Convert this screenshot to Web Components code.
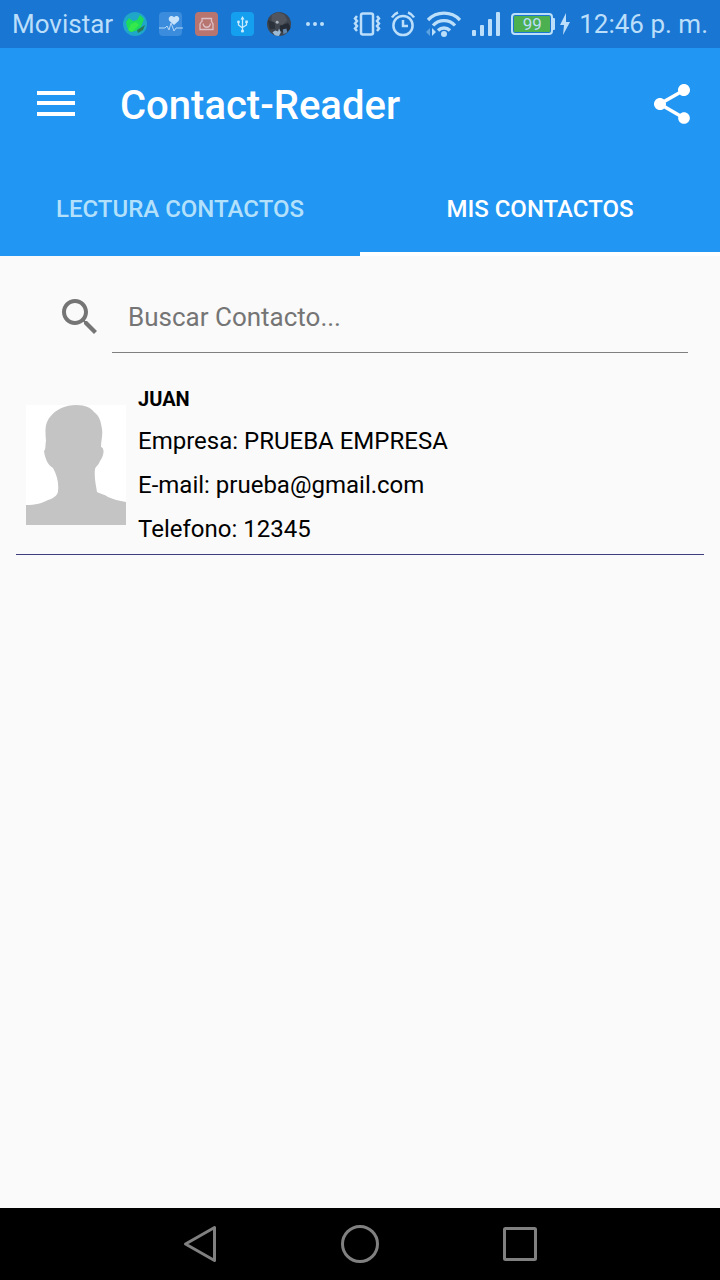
<!DOCTYPE html>
<html lang="es">
<head>
<meta charset="utf-8">
<meta name="viewport" content="width=device-width, initial-scale=1">
<title>Contact-Reader</title>
<style>
  body {
    margin: 0;
    font-family: Roboto, "Noto Sans", sans-serif;
    background: #fafafa;
    color: #000;
  }
</style>
</head>
<body>
<contact-app></contact-app>

<script>
// Barra de estado del sistema
class StatusBar extends HTMLElement {
  constructor() {
    super();
    this.attachShadow({ mode: 'open' });
    this.render();
  }

  render() {
    this.shadowRoot.innerHTML = `
      <style>
        :host {
          display: flex;
          align-items: center;
          justify-content: space-between;
          height: 48px;
          padding: 0 12px;
          background: #1976d2;
          color: #bbdefb;
          font-size: 26px;
          line-height: 50px;
          white-space: nowrap;
        }

        .group, .icons {
          display: flex;
          align-items: center;
        }

        .left {
          gap: 10px;
        }

        .left .icons {
          gap: 12px;
        }

        .right {
          gap: 8px;
        }

        .right .icons {
          gap: 10px;
        }

        .power {
          display: flex;
          align-items: center;
          gap: 4px;
        }

        .battery {
          display: flex;
          align-items: center;
        }

        .level {
          box-sizing: border-box;
          width: 42px;
          height: 22px;
          border: 2px solid #bbdefb;
          border-radius: 4px;
          background: #4caf50;
          box-shadow: inset 0 0 0 1px #1976d2;
          font-size: 17px;
          line-height: 19px;
          text-align: center;
        }

        .cap {
          width: 2px;
          height: 12px;
          background: #bbdefb;
          border-radius: 0 1px 1px 0;
        }

        svg {
          display: block;
          flex: none;
        }
      </style>

      <div class="group left">
        <slot name="carrier"></slot>
        <div class="icons">
          <svg width="24" height="24" viewBox="0 0 24 24">
            <circle cx="12" cy="12" r="12" fill="#1fa6c8"></circle>
            <path d="M3 10 6 6l4 3 4-1 3-5 4 4-3 8-5 4-6 1-3-5z" fill="#1ddb5c"></path>
            <path d="M8 12l5-2 3 3-7 7-4-2z" fill="#35e84b"></path>
            <path d="M14 18l8-5-2 5-5 3z" fill="#277c55"></path>
          </svg>
          <svg width="24" height="24" viewBox="0 0 24 24">
            <rect x="0" y="0" width="23" height="24" rx="4" fill="#3b8cdc"></rect>
            <path d="M15 13 10.500 9C8 6 12 2 15 5.300 18 2 22 6 19.500 9z" fill="#c7e3fb"></path>
            <path d="M0 16h6l2-2 2 4 2-7 3 8 2-3h7" fill="none" stroke="#b6d8f7" stroke-width="1"></path>
          </svg>
          <svg width="24" height="24" viewBox="0 0 24 24">
            <rect x="0" y="0" width="23" height="24" rx="4" fill="#b87570"></rect>
            <g fill="none" stroke="#dcc0c6" stroke-width="1.300">
              <path d="M7 10V6.500h9.500V10"></path>
              <path d="M6.500 9.500 5 12v5.500h13V12l-1.500-2.500"></path>
              <path d="M8 11.500c1 5 6.500 5 7.500 0"></path>
            </g>
          </svg>
          <svg width="24" height="24" viewBox="0 0 24 24">
            <rect x="0" y="0" width="23" height="24" rx="4" fill="#14a0ee"></rect>
            <g fill="none" stroke="#c8ebff" stroke-width="1.300">
              <path d="M11.500 6v13M7.500 10v3l4 3M15.500 10v3l-4 2.500"></path>
            </g>
            <path d="M11.500 4l2 3.500h-4zM14.300 8.500h2.500V11h-2.500z" fill="#c8ebff"></path>
            <circle cx="7.500" cy="10" r="1.400" fill="#c8ebff"></circle>
            <circle cx="11.500" cy="19" r="1.600" fill="#c8ebff"></circle>
          </svg>
          <svg width="24" height="24" viewBox="0 0 26 26">
            <defs><clipPath id="disc"><circle cx="13" cy="13" r="13"></circle></clipPath></defs>
            <g clip-path="url(#disc)">
              <path d="M0 0h26v26H0z" fill="#3f454f"></path>
              <path d="M5 3l7-3 7 3 3 6-5 5-6-1-6-3z" fill="#50555e"></path>
              <path d="M1 9l7 2 1 7-6 1z" fill="#2b323c"></path>
              <path d="M14 15l9-3 3 6-6 5-6-3z" fill="#252b34"></path>
              <circle cx="11" cy="11" r="1.600" fill="#a9b1ba"></circle>
              <path d="M6 22l3-2 3 1 1-3 2 4-2 4H9z" fill="#9dbad4"></path>
              <path d="M17 19l4-1 1 4-4 2z" fill="#6387ac"></path>
            </g>
          </svg>
          <svg width="24" height="24" viewBox="0 0 24 24" fill="#bbdefb">
            <circle cx="5" cy="12" r="2"></circle>
            <circle cx="12" cy="12" r="2"></circle>
            <circle cx="19" cy="12" r="2"></circle>
          </svg>
        </div>
      </div>

      <div class="group right">
        <div class="icons">
          <svg width="28" height="24" viewBox="0 0 28 24" fill="none" stroke="#bbdefb">
            <rect x="8" y="1.500" width="12" height="21" rx="2" stroke-width="2.500"></rect>
            <path d="M4 4 2 6.500 4 9 2 11.500 4 14 2 16.500 4 19M24 4l2 2.500L24 9l2 2.500L24 14l2 2.500L24 19" stroke-width="2.500"></path>
          </svg>
          <svg width="24" height="26" viewBox="0 0 24 26" fill="none" stroke="#bbdefb" stroke-width="2.500">
            <circle cx="12" cy="14.500" r="9.600"></circle>
            <path d="M12 9v6h5"></path>
            <path d="M1 6.500Q3 3 7 1.500M23 6.500Q21 3 17 1.500"></path>
          </svg>
          <svg width="36" height="26" viewBox="0 0 36 26">
            <g fill="none" stroke="#bbdefb" stroke-width="3.300">
              <path d="M3 9A22 22 0 0 1 35 9"></path>
              <path d="M8 14.500A15 15 0 0 1 30 14.500"></path>
              <path d="M13 19.500A8.500 8.500 0 0 1 25 19.500"></path>
            </g>
            <circle cx="19" cy="23" r="3" fill="#bbdefb"></circle>
            <path d="M7 17l4 4-4 4z" fill="#bbdefb"></path>
            <path d="M5 17l-4 4 4 4z" fill="#5fa2e2"></path>
          </svg>
          <svg width="30" height="26" viewBox="0 0 30 26" fill="#bbdefb">
            <rect x="1" y="19" width="4" height="6" rx="1"></rect>
            <rect x="9" y="14" width="4" height="11" rx="1"></rect>
            <rect x="17" y="8" width="4" height="17" rx="1"></rect>
            <rect x="25" y="1" width="4" height="24" rx="1"></rect>
          </svg>
          <div class="power">
            <div class="battery">
              <div class="level"><slot name="battery"></slot></div>
              <div class="cap"></div>
            </div>
            <svg width="12" height="22" viewBox="0 0 12 22" fill="#bbdefb">
              <path d="M7 0 1 12h4L4 22l7-13H7z"></path>
            </svg>
          </div>
        </div>
        <slot name="time"></slot>
      </div>
    `;
  }
}

// Barra superior con menú, título y compartir
class AppToolbar extends HTMLElement {
  constructor() {
    super();
    this.attachShadow({ mode: 'open' });
    this.render();
  }

  render() {
    this.shadowRoot.innerHTML = `
      <style>
        :host {
          display: flex;
          align-items: center;
          height: 112px;
          padding: 0 24px 0 32px;
          background: #2196f3;
          color: #fff;
        }

        h1 {
          flex: 1;
          margin: 0;
          padding: 4px 0 0 40px;
          font-size: 40px;
          font-weight: 500;
          line-height: 48px;
        }

        button {
          display: block;
          padding: 0;
          border: none;
          background: none;
          color: inherit;
          cursor: pointer;
        }

        svg {
          display: block;
        }
      </style>

      <button type="button" aria-label="Abrir menú">
        <svg width="48" height="48" viewBox="0 0 48 48" fill="currentColor">
          <path d="M5 11h38v4H5zM5 21h38v4H5zM5 32h38v4H5z"></path>
        </svg>
      </button>
      <h1><slot></slot></h1>
      <button type="button" aria-label="Compartir">
        <svg width="48" height="48" viewBox="0 0 24 24" fill="currentColor">
          <path d="M18 16.080c-.76 0-1.440.3-1.960.77L8.910 12.700c.05-.23.09-.46.09-.7s-.04-.47-.09-.7l7.050-4.110c.54.5 1.250.81 2.040.81 1.660 0 3-1.340 3-3s-1.340-3-3-3-3 1.340-3 3c0 .24.04.47.09.7L8.040 9.810C7.500 9.310 6.790 9 6 9c-1.660 0-3 1.340-3 3s1.340 3 3 3c.79 0 1.500-.31 2.040-.81l7.120 4.160c-.05.21-.08.43-.08.65 0 1.610 1.310 2.920 2.920 2.920s2.920-1.310 2.920-2.920-1.310-2.920-2.920-2.920z"></path>
        </svg>
      </button>
    `;
  }
}

// Pestañas
class AppTabs extends HTMLElement {
  constructor() {
    super();
    this.attachShadow({ mode: 'open' });
    this.tabs = ['Lectura contactos', 'Mis contactos'];
    this.active = 1;
    this.render();
  }

  connectedCallback() {
    this.buttons = this.shadowRoot.querySelectorAll('button');
    this.buttons.forEach((button, index) => {
      button.addEventListener('click', () => this.select(index));
    });
  }

  select(index) {
    this.active = index;
    this.buttons.forEach((button, i) => {
      button.setAttribute('aria-selected', String(i === index));
    });
  }

  render() {
    this.shadowRoot.innerHTML = `
      <style>
        :host {
          display: block;
          background: #2196f3;
        }

        .tabs {
          display: grid;
          grid-template-columns: 1fr 1fr;
        }

        button {
          height: 96px;
          padding: 6px 0 0;
          border: none;
          border-bottom: 4px solid transparent;
          background: none;
          color: #b3e0fb;
          font-family: inherit;
          font-size: 24px;
          font-weight: 500;
          text-transform: uppercase;
          cursor: pointer;
        }

        button[aria-selected="true"] {
          color: #fff;
          border-bottom-color: #fff;
        }
      </style>

      <div class="tabs" role="tablist">
        ${this.tabs.map((tab, i) => `
          <button type="button" role="tab" aria-selected="${i === this.active}">${tab}</button>
        `).join('')}
      </div>
    `;
  }
}

// Campo de búsqueda
class SearchField extends HTMLElement {
  constructor() {
    super();
    this.attachShadow({ mode: 'open' });
    this.render();
  }

  render() {
    this.shadowRoot.innerHTML = `
      <style>
        :host {
          display: flex;
          align-items: center;
          gap: 8px;
          padding: 24px 32px 0 56px;
        }

        label, svg {
          display: block;
        }

        input {
          flex: 1;
          min-width: 0;
          box-sizing: border-box;
          height: 73px;
          padding: 2px 16px 0;
          border: none;
          border-bottom: 1px solid #7f7f7f;
          border-radius: 0;
          outline: none;
          background: none;
          font-family: inherit;
          font-size: 26px;
          color: #000;
        }

        input::placeholder {
          color: #757575;
          opacity: 1;
        }
      </style>

      <label for="search" aria-label="Buscar">
        <svg width="48" height="48" viewBox="0 0 24 24" fill="#757575">
          <path d="M15.500 14h-.79l-.28-.27C15.410 12.590 16 11.110 16 9.500 16 5.910 13.090 3 9.500 3S3 5.910 3 9.500 5.910 16 9.500 16c1.610 0 3.090-.59 4.230-1.570l.27.28v.79l5 4.990L20.490 19l-4.990-5zm-6 0C7.010 14 5 11.990 5 9.500S7.010 5 9.500 5 14 7.010 14 9.500 11.990 14 9.500 14z"></path>
        </svg>
      </label>
      <input id="search" type="text" placeholder="Buscar Contacto...">
    `;
  }
}

// Fila de contacto
class ContactItem extends HTMLElement {
  constructor() {
    super();
    this.attachShadow({ mode: 'open' });
    this.render();
  }

  render() {
    this.shadowRoot.innerHTML = `
      <style>
        :host {
          display: flex;
          align-items: center;
          gap: 12px;
          padding: 0 10px 3px;
          border-bottom: 1px solid #3f3f7f;
        }

        svg {
          display: block;
          flex: none;
          background: #fff;
        }

        h2, p {
          margin: 0;
        }

        h2 {
          font-size: 20px;
          font-weight: 700;
          line-height: 40px;
        }

        p {
          font-size: 24px;
          line-height: 44px;
        }
      </style>

      <svg width="100" height="120" viewBox="0 0 100 120" role="img" aria-label="Foto del contacto">
        <path d="M0 120V100C9 100 17 98 22 95 29 93 32 89 32 86 33 78 31 70 27 63 22 60 19 54 18 46 20 44 19 41 20 36 19 25 19 18 24 12 30 4 40 0 50 0 60 0 65 3 68 7 74 11 75 18 76 24 77 30 75 36 75 42 79 43 78 51 74 56 72 61 70 61 69 64 68 73 70 80 71 87 75 89 78 89 82 92 87 94 93 96 100 97V120Z" fill="#c4c4c4"></path>
      </svg>
      <div>
        <h2><slot name="name"></slot></h2>
        <p>Empresa: <slot name="company"></slot></p>
        <p>E-mail: <slot name="email"></slot></p>
        <p>Telefono: <slot name="phone"></slot></p>
      </div>
    `;
  }
}

// Botones de navegación del sistema
class NavBar extends HTMLElement {
  constructor() {
    super();
    this.attachShadow({ mode: 'open' });
    this.render();
  }

  render() {
    this.shadowRoot.innerHTML = `
      <style>
        :host {
          display: flex;
          align-items: center;
          justify-content: center;
          gap: 120px;
          height: 72px;
          background: #000;
        }

        button {
          padding: 0;
          border: none;
          background: none;
          cursor: pointer;
        }

        svg {
          display: block;
          fill: none;
          stroke: #808080;
          stroke-width: 3;
          stroke-linejoin: round;
        }
      </style>

      <button type="button" aria-label="Atrás">
        <svg width="40" height="40" viewBox="0 0 40 40"><path d="M5.500 20 34.500 3.500v33z"></path></svg>
      </button>
      <button type="button" aria-label="Inicio">
        <svg width="40" height="40" viewBox="0 0 40 40"><circle cx="20" cy="20" r="17.500"></circle></svg>
      </button>
      <button type="button" aria-label="Recientes">
        <svg width="40" height="40" viewBox="0 0 40 40"><rect x="4.500" y="4.500" width="31" height="31" rx="1"></rect></svg>
      </button>
    `;
  }
}

class ContactApp extends HTMLElement {
  constructor() {
    super();
    this.attachShadow({ mode: 'open' });
    this.render();
  }

  render() {
    this.shadowRoot.innerHTML = `
      <style>
        :host {
          display: flex;
          flex-direction: column;
          min-height: 100vh;
        }

        main {
          flex: 1;
        }

        .list {
          padding: 26px 16px 0;
        }
      </style>

      <status-bar>
        <span slot="carrier">Movistar</span>
        <span slot="battery">99</span>
        <span slot="time">12:46 p. m.</span>
      </status-bar>
      <app-toolbar>Contact-Reader</app-toolbar>
      <app-tabs></app-tabs>
      <main>
        <search-field></search-field>
        <div class="list">
          <contact-item>
            <span slot="name">JUAN</span>
            <span slot="company">PRUEBA EMPRESA</span>
            <span slot="email">prueba@gmail.com</span>
            <span slot="phone">12345</span>
          </contact-item>
        </div>
      </main>
      <nav-bar></nav-bar>
    `;
  }
}

customElements.define('status-bar', StatusBar);
customElements.define('app-toolbar', AppToolbar);
customElements.define('app-tabs', AppTabs);
customElements.define('search-field', SearchField);
customElements.define('contact-item', ContactItem);
customElements.define('nav-bar', NavBar);
customElements.define('contact-app', ContactApp);
</script>
</body>
</html>
